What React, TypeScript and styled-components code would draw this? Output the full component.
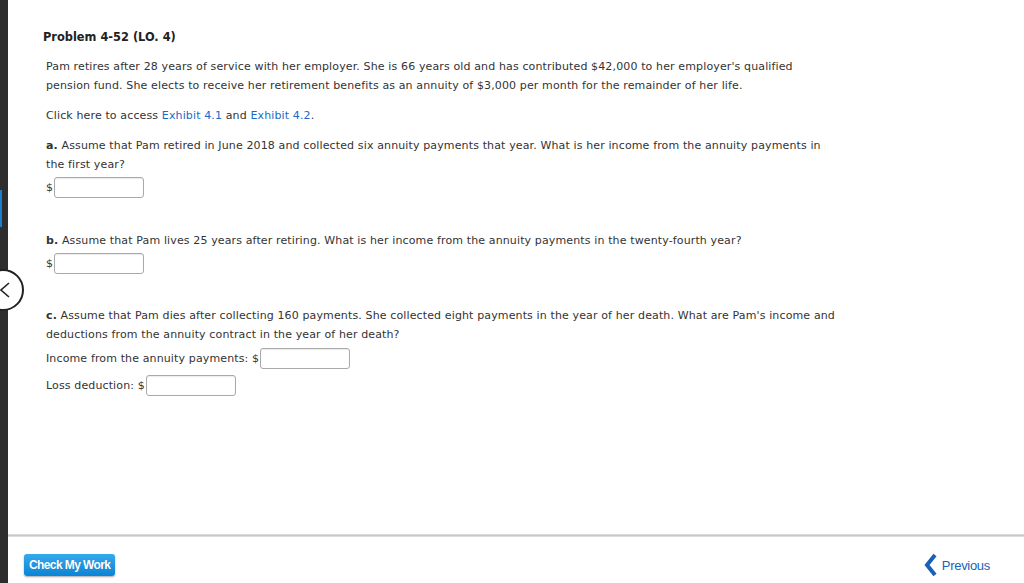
import styled, { createGlobalStyle } from "styled-components";

const GlobalStyle = createGlobalStyle`
  html, body {
    margin: 0;
    padding: 0;
    background: #ffffff;
  }
  body {
    font-family: "DejaVu Sans", Verdana, sans-serif;
    color: #333333;
  }
`;

const Page = styled.div`
  display: flex;
  width: 1024px;
  height: 583px;
  overflow: hidden;
  position: relative;
`;

const Rail = styled.div`
  width: 8px;
  flex: none;
  background: #2d2d2d;
  display: flex;
  flex-direction: column;
`;

const RailMark = styled.div<{ $top: number; $height: number; $color: string }>`
  margin-top: ${(p) => p.$top}px;
  height: ${(p) => p.$height}px;
  width: 2px;
  background: ${(p) => p.$color};
  flex: none;
`;

const CollapseButton = styled.div`
  position: absolute;
  left: -18px;
  top: 269px;
  width: 42px;
  height: 42px;
  border: 2px solid #222222;
  border-radius: 50%;
  background: #ffffff;
  display: flex;
  align-items: center;
  justify-content: flex-end;
  padding-right: 12px;
  box-sizing: border-box;
`;

const Main = styled.div`
  flex: 1;
  display: flex;
  flex-direction: column;
`;

const Content = styled.div`
  flex: 1;
  padding: 27px 0 0 35px;
  font-size: 11px;
  letter-spacing: 0.13px;
  line-height: 19px;
`;

const Title = styled.div`
  font-weight: bold;
  font-size: 11.4px;
  letter-spacing: 0;
  line-height: 20px;
  color: #222222;
`;

const Block = styled.div<{ $gap: number }>`
  margin-top: ${(p) => p.$gap}px;
  padding-left: 3px;
`;

const Label = styled.b`
  color: #333333;
`;

const ExLink = styled.a`
  color: #1a6ac7;
  text-decoration: none;
`;

const AnswerRow = styled.div<{ $gap: number }>`
  margin-top: ${(p) => p.$gap}px;
  padding-left: 3px;
  display: flex;
  align-items: center;
  height: 21px;
`;

const Dollar = styled.span`
  margin-right: 1px;
`;

const AnswerInput = styled.input`
  width: 90px;
  height: 21px;
  box-sizing: border-box;
  border: 1px solid #a9a9a9;
  border-radius: 3px;
  box-shadow: inset 0 1px 1px rgba(0, 0, 0, 0.08);
  padding: 0 4px;
  font-family: inherit;
  font-size: 11px;
  outline: none;
`;

const Divider = styled.div`
  height: 3px;
  background: linear-gradient(#e2e2e2, #c8c8c8 50%, #e6e6e6);
  flex: none;
`;

const Footer = styled.div`
  height: 46px;
  box-sizing: border-box;
  flex: none;
  display: flex;
  align-items: center;
  justify-content: space-between;
  padding: 10px 34px 0 16px;
`;

const CheckButton = styled.button`
  height: 22px;
  padding: 0 5px;
  border: none;
  border-radius: 3px;
  background: linear-gradient(#35aaee, #0c83d4);
  box-shadow: 0 1px 2px rgba(0, 0, 0, 0.35);
  color: #ffffff;
  font-family: "Liberation Sans", Arial, sans-serif;
  font-size: 12px;
  letter-spacing: -0.6px;
  font-weight: bold;
  text-shadow: 0 0 1px rgba(0, 0, 0, 0.2);
  cursor: pointer;
`;

const PrevLink = styled.a`
  display: flex;
  align-items: center;
  gap: 5px;
  color: #1a5fb8;
  font-family: "Liberation Sans", Arial, sans-serif;
  font-size: 13px;
  letter-spacing: -0.3px;
  text-decoration: none;
`;

export default function App() {
  return (
    <>
      <GlobalStyle />
      <Page>
        <Rail>
          <RailMark $top={190} $height={37} $color="#1b7fd0" />
        </Rail>
        <CollapseButton>
          <svg width="10" height="16" viewBox="0 0 10 16">
            <path d="M9 1 L1 8 L9 15" fill="none" stroke="#222" strokeWidth="1.6" />
          </svg>
        </CollapseButton>
        <Main>
          <Content>
            <Title>Problem 4-52 (LO. 4)</Title>
            <Block $gap={10}>
              Pam retires after 28 years of service with her employer. She is 66 years old and has contributed $42,000 to her employer's qualified
              <br />
              pension fund. She elects to receive her retirement benefits as an annuity of $3,000 per month for the remainder of her life.
            </Block>
            <Block $gap={11}>
              Click here to access <ExLink href="#">Exhibit 4.1</ExLink> and <ExLink href="#">Exhibit 4.2</ExLink>.
            </Block>
            <Block $gap={11}>
              <Label>a.</Label> Assume that Pam retired in June 2018 and collected six annuity payments that year. What is her income from the annuity payments in
              <br />
              the first year?
            </Block>
            <AnswerRow $gap={3}>
              <Dollar>$</Dollar>
              <AnswerInput />
            </AnswerRow>
            <Block $gap={33}>
              <Label>b.</Label> Assume that Pam lives 25 years after retiring. What is her income from the annuity payments in the twenty-fourth year?
            </Block>
            <AnswerRow $gap={3}>
              <Dollar>$</Dollar>
              <AnswerInput />
            </AnswerRow>
            <Block $gap={32}>
              <Label>c.</Label> Assume that Pam dies after collecting 160 payments. She collected eight payments in the year of her death. What are Pam's income and
              <br />
              deductions from the annuity contract in the year of her death?
            </Block>
            <AnswerRow $gap={4}>
              Income from the annuity payments:&nbsp;<Dollar>$</Dollar>
              <AnswerInput />
            </AnswerRow>
            <AnswerRow $gap={6}>
              Loss deduction:&nbsp;<Dollar>$</Dollar>
              <AnswerInput />
            </AnswerRow>
          </Content>
          <Divider />
          <Footer>
            <CheckButton>Check My Work</CheckButton>
            <PrevLink href="#">
              <svg width="13" height="24" viewBox="0 0 13 24">
                <path d="M11 2 L3 12 L11 22" fill="none" stroke="#1a5fb8" strokeWidth="4" strokeLinejoin="miter" />
              </svg>
              Previous
            </PrevLink>
          </Footer>
        </Main>
      </Page>
    </>
  );
}
